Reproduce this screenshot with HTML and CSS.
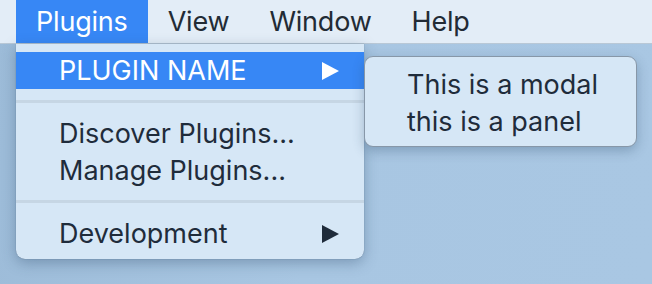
FILE: index.html
```html
<!DOCTYPE html>
<html lang="en">
<head>
    <meta charset="UTF-8">
    <meta name="viewport" content="width=device-width, initial-scale=1.0">
    <title>Plugins Menu</title>
    <link rel="stylesheet" href="styles.css">
</head>
<body>
    <div class="desktop">
        <div class="menubar">
            <div class="menubar-item active">Plugins</div>
            <div class="menubar-item">View</div>
            <div class="menubar-item">Window</div>
            <div class="menubar-item">Help</div>
        </div>

        <div class="dropdown">
            <div class="menu-item selected">
                <span>PLUGIN NAME</span>
                <svg class="arrow" width="18" height="18" viewBox="0 0 18 18"><polygon points="0,0 17,9 0,18" fill="currentColor"/></svg>
            </div>
            <div class="separator"></div>
            <div class="menu-item">Discover Plugins...</div>
            <div class="menu-item">Manage Plugins...</div>
            <div class="separator"></div>
            <div class="menu-item">
                <span>Development</span>
                <svg class="arrow" width="18" height="18" viewBox="0 0 18 18"><polygon points="0,0 17,9 0,18" fill="currentColor"/></svg>
            </div>
        </div>

        <div class="panel">
            <div>This is a modal</div>
            <div>this is a panel</div>
        </div>
    </div>
</body>
</html>
```

FILE: styles.css
```css
body {
    margin: 0;
    font-family: Inter, "Helvetica Neue", sans-serif;
    font-size: 27px;
    color: #1f2c3b;
}

.desktop {
    position: relative;
    width: 652px;
    height: 284px;
    overflow: hidden;
    background: linear-gradient(100deg, #9cbbd8 0%, #a8c6e2 50%, #a9c7e3 100%);
}

.menubar {
    display: flex;
    height: 44px;
    padding-left: 16px;
    background-color: #e3edf7;
    border-bottom: 1px solid #b9c8d6;
    box-sizing: border-box;
}

.menubar-item {
    padding: 0 20px;
    line-height: 44px;
    letter-spacing: -0.2px;
    color: #222b35;
}

.menubar-item.active {
    background-color: #3787f5;
    color: white;
}

.dropdown {
    position: absolute;
    top: 44px;
    left: 16px;
    width: 348px;
    padding: 8px 0 7px;
    box-sizing: border-box;
    background-color: #d6e7f6;
    border-radius: 0 0 9px 9px;
    box-shadow: 0 4px 14px rgba(40, 70, 100, 0.35), 0 0 1px rgba(30, 50, 70, 0.6);
}

.menu-item {
    display: flex;
    align-items: center;
    justify-content: space-between;
    height: 37px;
    padding: 0 24px 0 43px;
}

.menu-item span,
.menu-item {
    line-height: 38px;
}

.menu-item.selected {
    background-color: #3787f5;
    color: white;
}

.arrow {
    display: block;
}

.separator {
    height: 3px;
    margin: 11px 0 12px;
    background-color: #c6d6e4;
}

.panel {
    position: absolute;
    top: 56px;
    left: 364px;
    width: 273px;
    height: 91px;
    padding: 9px 0 0 42px;
    box-sizing: border-box;
    background-color: #d6e7f6;
    border-radius: 9px;
    border: 1px solid #8797a8;
    box-shadow: 0 4px 12px rgba(40, 70, 100, 0.3);
    line-height: 37px;
}
```
